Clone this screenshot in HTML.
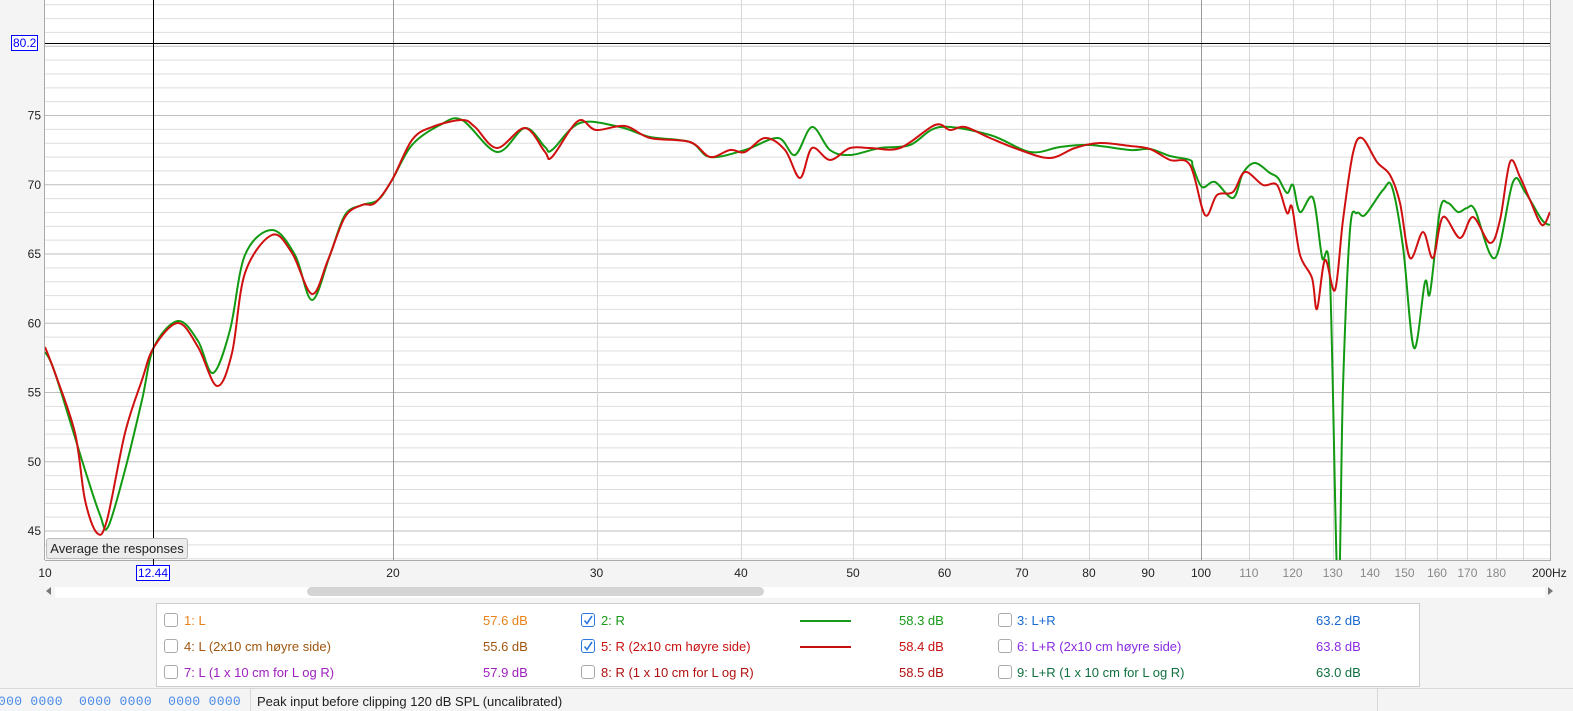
<!DOCTYPE html>
<html><head><meta charset="utf-8"><style>
body{margin:0;width:1573px;height:711px;background:#f4f4f4;font-family:"Liberation Sans",sans-serif;overflow:hidden;position:relative}
.a{position:absolute;white-space:nowrap}
.ax{font-size:12px;color:#222}
.lg{font-size:13px}
.cb{position:absolute;width:12px;height:12px;border:1px solid #aaa;border-radius:3px;background:#fff}
.cb.on{border-color:#2a7ae0}
</style></head><body>
<svg id="p" class="a" style="left:0;top:0" width="1573" height="600"></svg>
<div class="a ax" style="left:11px;top:35px;border:1px solid #00f;color:#00f;background:#fff;padding:0 1px;line-height:14px">80.2</div>
<div class="a ax" style="left:136px;top:565px;border:1px solid #00f;color:#00f;background:#fff;padding:0 1px;line-height:14px">12.44</div>
<div class="a" style="left:46px;top:538px;width:140px;height:19px;background:#ececec;border:1px solid #bbb;border-radius:3px;font-size:13px;line-height:19px;text-align:center;color:#222">Average the responses</div>
<div class="a" style="left:55px;top:587px;width:1490px;height:11px;background:#fff"></div>
<div class="a" style="left:307px;top:587px;width:457px;height:9px;background:#d4d4d4;border-radius:5px"></div>
<div class="a" style="left:46px;top:587px;width:0;height:0;border:4px solid transparent;border-right:5px solid #777;border-left:0"></div>
<div class="a" style="left:1548px;top:587px;width:0;height:0;border:4px solid transparent;border-left:5px solid #777;border-right:0"></div>
<div class="a" style="left:156px;top:603px;width:1262px;height:82px;background:#fff;border:1px solid #ccc"></div>
<div id="lg"></div>
<div class="a" style="left:0;top:688px;width:1573px;border-top:1px solid #d8d8d8"></div>
<div class="a" style="left:250px;top:689px;height:22px;border-left:1px solid #d8d8d8"></div>
<div class="a" style="left:1377px;top:689px;height:22px;border-left:1px solid #d8d8d8"></div>
<div class="a" style="left:-2px;top:694px;font-family:'Liberation Mono',monospace;font-size:13px;color:#4a8ae8;letter-spacing:0.3px">000 0000&nbsp; 0000 0000&nbsp; 0000 0000</div>
<div class="a" style="left:257px;top:694px;font-size:13px;color:#222">Peak input before clipping 120 dB SPL (uncalibrated)</div>
<script>
var s='',L=45,R=1550,B=560;
function Y(d){return 43.5+(80.2-d)*13.85}
function X(f){return 45+1156*Math.log10(f/10)}
s+='<rect x="45" y="0" width="1505" height="560" fill="#fff"/>';
for(var d=43;d<=83;d++){var y=Y(d);if(y<0||y>B)continue;s+='<line x1="45" x2="1550" y1="'+y+'" y2="'+y+'" stroke="'+(d%5?'#dedede':'#bdbdbd')+'" stroke-width="1"/>';}
var fs=[30,40,50,60,70,80,90,110,120,130,140,150,160,170,180,190];
fs.forEach(function(f){var x=Math.round(X(f))+.5;s+='<line x1="'+x+'" x2="'+x+'" y1="0" y2="560" stroke="#d6d6d6"/>'});
[20,100].forEach(function(f){var x=Math.round(X(f))+.5;s+='<line x1="'+x+'" x2="'+x+'" y1="0" y2="560" stroke="#999"/>'});
s+='<line x1="44.5" x2="44.5" y1="0" y2="560" stroke="#aaa"/><line x1="45" x2="1550" y1="560.5" y2="560.5" stroke="#aaa"/><line x1="1550.5" x2="1550.5" y1="0" y2="561" stroke="#aaa"/>';
[75,70,65,60,55,50,45].forEach(function(d){s+='<text x="41" y="'+(Y(d)+4)+'" text-anchor="end" font-size="12" fill="#222">'+d+'</text>'});
var lab=[[10,'#222'],[20,'#222'],[30,'#222'],[40,'#222'],[50,'#222'],[60,'#222'],[70,'#222'],[80,'#222'],[90,'#222'],[100,'#222'],[110,'#888'],[120,'#888'],[130,'#888'],[140,'#888'],[150,'#888'],[160,'#888'],[170,'#888'],[180,'#888']];
lab.forEach(function(l){s+='<text x="'+X(l[0])+'" y="577" text-anchor="middle" font-size="12" fill="'+l[1]+'">'+l[0]+'</text>'});
s+='<text x="1532" y="577" font-size="12" fill="#222">200Hz</text>';
s+='<clipPath id="c"><rect x="45" y="0" width="1505" height="560"/></clipPath>';
var G=[45,352,55,373,85,470,100,515,108,527,125,470,142,400,154,347,178,321,198,341,213,373,230,330,245,255,272,230,295,255,312,300,330,255,345,215,362,205,378,200,392,180,412,145,440,125,462,120,497,152,525,128,545,147,552,150,580,123,620,127,650,137,690,142,710,157,745,150,778,138,795,155,812,127,830,150,850,155,880,148,910,145,940,127,990,135,1030,152,1060,147,1090,145,1130,150,1150,149,1170,156,1190,160,1193,167,1202,187,1215,182,1233,198,1243,173,1255,163,1270,173,1278,178,1287,193,1293,185,1300,212,1313,198,1322,257,1330,280,1338,600,1343,387,1350,230,1357,213,1365,215,1383,190,1392,187,1403,247,1414,348,1425,282,1430,293,1440,210,1448,203,1458,212,1467,208,1475,210,1495,258,1513,182,1525,192,1542,220,1550,225];
var Rd=[45,347,55,373,75,433,85,500,97,533,107,520,125,433,142,380,154,347,178,323,198,347,217,386,232,353,245,273,272,235,292,253,312,294,328,260,345,217,362,205,375,203,392,180,412,140,432,127,462,120,475,127,497,148,525,128,545,152,552,157,578,121,596,130,625,126,650,138,690,142,710,157,730,150,745,152,765,138,785,150,800,178,812,148,830,160,850,148,870,148,900,148,935,125,950,130,965,127,990,138,1020,150,1050,158,1075,148,1100,143,1130,146,1150,149,1170,160,1190,165,1205,215,1217,195,1233,192,1245,172,1263,185,1277,185,1287,213,1292,207,1300,255,1312,278,1317,309,1325,260,1335,290,1343,220,1353,153,1362,138,1377,162,1390,175,1400,203,1410,258,1423,232,1433,258,1443,217,1460,238,1473,217,1490,243,1500,220,1510,162,1520,177,1530,200,1542,225,1550,212];
function path(a){var p=[];for(var i=0;i<a.length;i+=2)p.push([a[i],a[i+1]]);var d='M'+p[0][0]+' '+p[0][1];for(var i=0;i<p.length-1;i++){var p0=p[i-1]||p[i],p1=p[i],p2=p[i+1],p3=p[i+2]||p2;d+=' C'+(p1[0]+(p2[0]-p0[0])/6)+' '+(p1[1]+(p2[1]-p0[1])/6)+' '+(p2[0]-(p3[0]-p1[0])/6)+' '+(p2[1]-(p3[1]-p1[1])/6)+' '+p2[0]+' '+p2[1];}return d}
s+='<g clip-path="url(#c)" fill="none" stroke-width="2" stroke-linejoin="round"><path d="'+path(G)+'" stroke="#129a12"/><path d="'+path(Rd)+'" stroke="#d01010"/></g>';
s+='<line x1="153.5" x2="153.5" y1="0" y2="566" stroke="#000"/><line x1="45" x2="1550" y1="43.5" y2="43.5" stroke="#000"/>';
document.getElementById('p').innerHTML=s;
var rows=[[619,[['1: L','#e8821a','57.6 dB',0],['2: R','#1a9a1a','58.3 dB',1],['3: L+R','#1a6ad0','63.2 dB',0]]],[645,[['4: L (2x10 cm høyre side)','#a0560e','55.6 dB',0],['5: R (2x10 cm høyre side)','#c81010','58.4 dB',1],['6: L+R (2x10 cm høyre side)','#8a2be2','63.8 dB',0]]],[671,[['7: L (1 x 10 cm for L og R)','#a020c0','57.9 dB',0],['8: R (1 x 10 cm for L og R)','#b01010','58.5 dB',0],['9: L+R (1 x 10 cm for L og R)','#107040','63.0 dB',0]]]];
var cx=[[164,184,483],[581,601,899],[998,1017,1316]],h='';
rows.forEach(function(r){r[1].forEach(function(c,i){var y=r[0];
h+='<div class="cb'+(c[3]?' on':'')+'" style="left:'+cx[i][0]+'px;top:'+(y-6)+'px">'+(c[3]?'<svg width="12" height="12" style="position:absolute;left:0;top:0"><path d="M2.5 6.5 L5 9.5 L10 2" fill="none" stroke="#2a7ae0" stroke-width="1.6"/></svg>':'')+'</div>';
h+='<div class="a lg" style="left:'+cx[i][1]+'px;top:'+(y-6)+'px;color:'+c[1]+'">'+c[0]+'</div>';
h+='<div class="a lg" style="left:'+cx[i][2]+'px;top:'+(y-6)+'px;color:'+c[1]+'">'+c[2]+'</div>';
if(c[3])h+='<div class="a" style="left:800px;top:'+(y+1)+'px;width:51px;height:2px;background:'+c[1]+'"></div>';
})});
document.getElementById('lg').innerHTML=h;
</script>
</body></html>
